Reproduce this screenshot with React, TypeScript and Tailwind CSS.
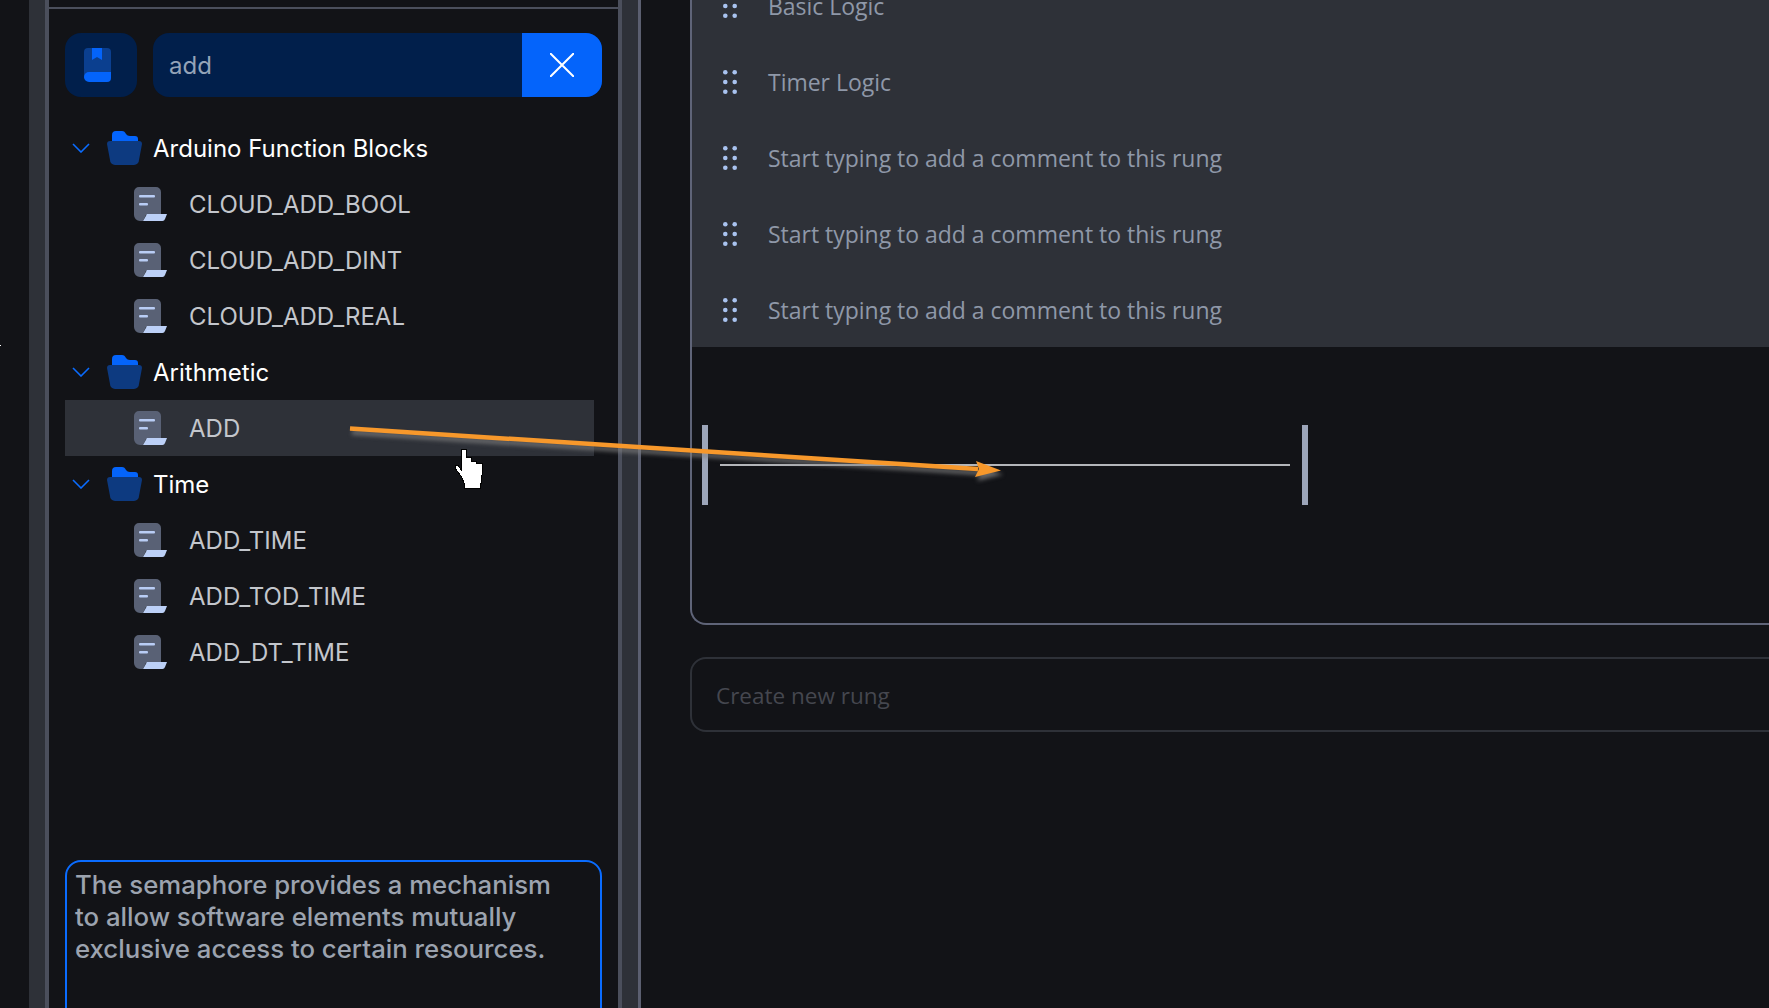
const Folder = () => (
  <svg width="35" height="34" viewBox="0 0 35 34" className="shrink-0">
    <path d="M5 13V4a4 4 0 0 1 4-4h6c2 0 3 1 4 3 1 1 2 2 4 2h5a3 3 0 0 1 3 3v7H5z" fill="#0464fb" />
    <path d="M3 10h29a3 3 0 0 1 3 3l-3 16a5 5 0 0 1-5 5H8a5 5 0 0 1-5-5L0 13a3 3 0 0 1 3-3z" fill="#0d3a80" />
  </svg>
);
const Scroll = () => (
  <svg width="33" height="34" viewBox="0 0 33 34" className="shrink-0">
    <path d="M5 0h17a5 5 0 0 1 5 5v23H12l-3 6H6a6 6 0 0 1-6-6V5a5 5 0 0 1 5-5z" fill="#596175" />
    <rect x="5" y="8" width="16" height="2.5" rx="1" fill="#b9cdf5" />
    <rect x="5" y="16" width="9" height="2.5" rx="1" fill="#b9cdf5" />
    <path d="M13 27h20l-2 5a3 3 0 0 1-3 2H9z" fill="#bcd0f7" />
  </svg>
);
const Book = () => (
  <svg width="27" height="34" viewBox="0 0 27 34">
    <path d="M4 0h19a4 4 0 0 1 4 4v26H0V4a4 4 0 0 1 4-4z" fill="#0b3f8f" />
    <path d="M8 0h10v12l-5-3-5 3z" fill="#0464fb" />
    <path d="M5 24h22v6a4 4 0 0 1-4 4H5a5 5 0 0 1-5-5 5 5 0 0 1 5-5z" fill="#0464fb" />
  </svg>
);
const Grip = () => (
  <svg width="14" height="24" viewBox="0 0 14 24" className="shrink-0" fill="#a9c3f0">
    <circle cx="2.3" cy="2.3" r="2.3" /><circle cx="11.7" cy="2.3" r="2.3" />
    <circle cx="2.3" cy="12" r="2.3" /><circle cx="11.7" cy="12" r="2.3" />
    <circle cx="2.3" cy="21.7" r="2.3" /><circle cx="11.7" cy="21.7" r="2.3" />
  </svg>
);
const Group = ({ name, items, active }: { name: string; items: string[]; active?: string }) => (
  <>
    <div className="flex h-14 items-center">
      <svg width="18" height="10" viewBox="0 0 18 10" className="ml-[7px] shrink-0" fill="none" stroke="#0a6cff" strokeWidth="1.6">
        <path d="M1 1l8 8 8-8" />
      </svg>
      <div className="ml-[17px]"><Folder /></div>
      <span className="ml-[11px] pt-[1px] text-[24px] text-white">{name}</span>
    </div>
    {items.map((it) => (
      <div key={it} className={`flex h-14 items-center pl-[69px] ${it === active ? "bg-[#2e3138]" : ""}`}>
        <Scroll />
        <span className="ml-[22px] pt-[1px] text-[24px] text-[#c3c6cc]">{it}</span>
      </div>
    ))}
  </>
);
const Comment = ({ text }: { text: string }) => (
  <div className="flex h-[76px] items-center pl-[31px]">
    <Grip />
    <span className="ml-[31px] font-['Open_Sans'] text-[23px] tracking-[-0.02px] text-[#8f98a8]">{text}</span>
  </div>
);
export default function App() {
  return (
    <div className="relative flex h-[1008px] w-[1769px] overflow-hidden bg-[#121317] font-['Inter',sans-serif]">
      <div className="flex w-[29px] shrink-0 items-start">
        <div className="mt-[345px] h-[1px] w-[1px] bg-white" />
      </div>
      <div className="w-4 shrink-0 bg-[#2e3138]" />
      <aside className="flex w-[577px] shrink-0 flex-col overflow-hidden border-x-4 border-[#4b4f5c] pt-[7px]">
        <div className="h-[2px] shrink-0 bg-[#4b4f5c]" />
        <div className="flex shrink-0 gap-4 pl-4 pr-4 pt-[24px]">
          <div className="flex h-16 w-[72px] shrink-0 items-center justify-center rounded-2xl bg-[#011f4b] pr-[8px]"><Book /></div>
          <div className="flex h-16 flex-1 overflow-hidden rounded-2xl bg-[#011f4b]">
            <div className="flex flex-1 items-center pl-4 pt-[1px] text-[24px] text-[#94a3b8]">add</div>
            <div className="flex w-20 items-center justify-center bg-[#0464fb]">
              <svg width="24" height="24" viewBox="0 0 24 24" fill="none" stroke="#fff" strokeWidth="2"><path d="M0 0l24 24M24 0L0 24" /></svg>
            </div>
          </div>
        </div>
        <div className="mr-6 ml-4 mt-[23px] flex shrink-0 flex-col">
          <Group name="Arduino Function Blocks" items={["CLOUD_ADD_BOOL", "CLOUD_ADD_DINT", "CLOUD_ADD_REAL"]} />
          <Group name="Arithmetic" items={["ADD"]} active="ADD" />
          <Group name="Time" items={["ADD_TIME", "ADD_TOD_TIME", "ADD_DT_TIME"]} />
        </div>
        <div className="mx-4 mt-[180px] h-[200px] shrink-0 rounded-t-2xl border-2 border-[#0a6cff] px-[8px] pt-[7px] text-[25.75px] leading-8 font-medium text-[#9ca3af]">
          The semaphore provides a mechanism<br />to allow software elements mutually<br />exclusive access to certain resources.
        </div>
      </aside>
      <div className="w-[19px] shrink-0 border-r-[3px] border-[#5b5f70] bg-[#2e3138]" />
      <main className="flex w-[1300px] shrink-0 flex-col pl-[49px]">
        <div className="-mt-[32px] h-[657px] shrink-0 rounded-bl-2xl border-b-2 border-l-2 border-[#5f6478]">
          <div className="h-[379px] bg-[#2e3138]">
            <Comment text="Basic Logic" />
            <Comment text="Timer Logic" />
            <Comment text="Start typing to add a comment to this rung" />
            <Comment text="Start typing to add a comment to this rung" />
            <Comment text="Start typing to add a comment to this rung" />
          </div>
          <div className="flex items-center gap-3 pl-[10px] pt-[78px]">
            <div className="h-20 w-[6px] bg-[#9ca5b9]" />
            <div className="h-[2px] w-[570px] bg-[#b4b6ba]" />
            <div className="h-20 w-[6px] bg-[#9ca5b9]" />
          </div>
        </div>
        <div className="mt-8 flex h-[75px] shrink-0 items-center rounded-2xl border-2 border-[#2e3138] pl-[24px] pt-[2px] font-['Open_Sans'] text-[22.5px] text-[#45474f]">
          Create new rung
        </div>
      </main>
      <svg width="1769" height="1008" viewBox="0 0 1769 1008" className="pointer-events-none absolute top-0 left-0 drop-shadow-[2px_4px_2px_rgba(130,130,130,0.75)]">
        <path d="M350 428.5L978 469" stroke="#f7982b" strokeWidth="4.5" />
        <path d="M976 461L1001 470.5L975 477L979 469z" fill="#f7982b" />
      </svg>
      <svg width="28" height="40" viewBox="0 0 28 40" shapeRendering="crispEdges" className="pointer-events-none absolute top-[449px] left-[455px]">
        <path d="M6.5 .5H11.5V8.5H16.5V12.5H21.5V14.5H27V26L25.5 39H9.5V35L6 27L.5 20V16.5H3L6.5 21Z" fill="#fff" stroke="#000" strokeWidth="1" />
      </svg>
    </div>
  );
}
